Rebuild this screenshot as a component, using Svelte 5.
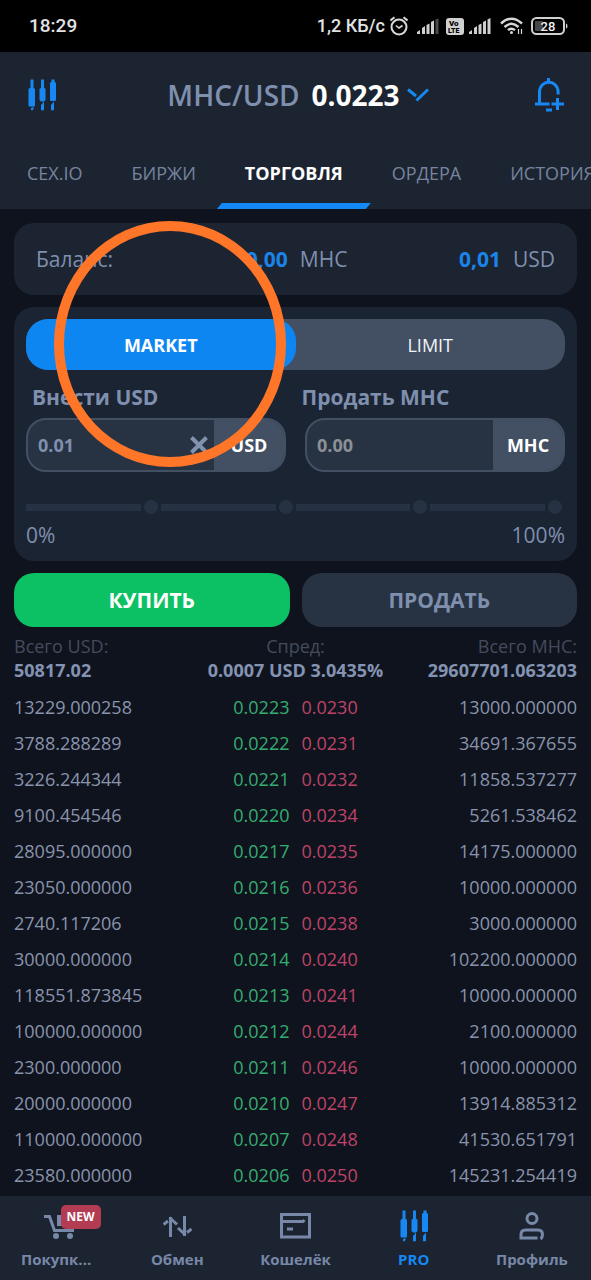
<script>
  const tabs = ['CEX.IO', 'БИРЖИ', 'ТОРГОВЛЯ', 'ОРДЕРА', 'ИСТОРИЯ'];
  let activeTab = $state('ТОРГОВЛЯ');
  let mode = $state('MARKET');
  let buyAmount = $state('0.01');
  let sellAmount = $state('');
  let percent = $state(0);

  const book = [
    ['13229.000258', '0.0223', '0.0230', '13000.000000'],
    ['3788.288289', '0.0222', '0.0231', '34691.367655'],
    ['3226.244344', '0.0221', '0.0232', '11858.537277'],
    ['9100.454546', '0.0220', '0.0234', '5261.538462'],
    ['28095.000000', '0.0217', '0.0235', '14175.000000'],
    ['23050.000000', '0.0216', '0.0236', '10000.000000'],
    ['2740.117206', '0.0215', '0.0238', '3000.000000'],
    ['30000.000000', '0.0214', '0.0240', '102200.000000'],
    ['118551.873845', '0.0213', '0.0241', '10000.000000'],
    ['100000.000000', '0.0212', '0.0244', '2100.000000'],
    ['2300.000000', '0.0211', '0.0246', '10000.000000'],
    ['20000.000000', '0.0210', '0.0247', '13914.885312'],
    ['110000.000000', '0.0207', '0.0248', '41530.651791'],
    ['23580.000000', '0.0206', '0.0250', '145231.254419']
  ];
</script>

{#snippet candles()}
  <svg width="30" height="32" viewBox="0 0 30 32" fill="currentColor" aria-hidden="true">
    <path d="M3.500 0.500h3v8l1.500 1.500v16.500q0 1-1 1h-4.500q-1 0-1-1v-16.500l2-1.500zM4 29l2.500-1v2l-1 1.300h-1.500z" />
    <path d="M14 0.500h3v8l1.500 1.500v11l-1.500 1.500h-3l-1.500-1.500v-11l1.500-1.500zM14 26l3-3.500v8.800h-3z" />
    <path d="M24.500 0.500h3v2l1.500 1.500v16.500q0 1.500-1 1.500h-4q-1 0-1-1.500v-16.500l1.500-1.500zM24 26l3-3.500v8.800h-3z" />
  </svg>
{/snippet}

<div class="app">
  <div class="status">
    <span>18:29</span>
    <div class="status-right">
      <span class="speed">1,2 КБ/с</span>
      <svg width="18" height="20" viewBox="0 0 18 20" fill="none" stroke="#d8d8d8" stroke-width="2" aria-hidden="true">
        <circle cx="9" cy="11" r="7.500" />
        <path d="M0.500 4.500L4.500 1.200M17.500 4.500L13.500 1.200" />
        <path d="M6 9.500l3 2.500 3.500-2.500" stroke-width="1.600" />
      </svg>
      <svg class="signal" width="22" height="16" viewBox="0 0 22 16" fill="#cfcfcf" aria-hidden="true">
        <path d="M0 16v-2l3-2v4zM5 16v-6l3-2v8zM9.500 16v-9l3-1.500v10.500zM14 16v-12l3-1.500v13.500z" />
        <path d="M18.500 16v-14.500l3-1v15.500z" fill="#4a4a4a" />
      </svg>
      <svg class="volte" width="18" height="17" viewBox="0 0 18 17" aria-hidden="true">
        <rect width="18" height="17" rx="3" fill="#d0d0d0" />
        <text x="3" y="8" font-size="8">Vo</text>
        <text x="2" y="15" font-size="7">LTE</text>
      </svg>
      <svg width="22" height="16" viewBox="0 0 22 16" fill="#cfcfcf" aria-hidden="true">
        <path d="M0 16v-2l3-2v4zM5 16v-6l3-2v8zM9.500 16v-9l3-1.500v10.500zM14 16v-12l3-1.500v13.500zM18.500 16v-14.500l3-1.500v16z" />
      </svg>
      <svg class="wifi" width="24" height="18" viewBox="0 0 24 18" fill="none" stroke="#d8d8d8" stroke-width="2.400" aria-hidden="true">
        <path d="M1 6.500q10.500-9.500 21 0M4.500 10q7-6.500 14 0M8 13.200q3.500-3 7 0" />
        <circle cx="11.500" cy="15.500" r="1.500" fill="#d8d8d8" stroke="none" />
        <path d="M18.500 12v5M21.500 12v5" stroke-width="1.200" />
      </svg>
      <svg class="battery" width="37" height="18" viewBox="0 0 37 18" aria-hidden="true">
        <rect x="1" y="1" width="32" height="16" rx="4.500" fill="none" stroke="#d0d0d0" stroke-width="2" />
        <rect x="4" y="4" width="8" height="10" rx="1" fill="#484848" />
        <path d="M35 6.500q1.500 0 1.500 2.500t-1.500 2.500z" fill="#d0d0d0" />
        <text x="17" y="13.500" text-anchor="middle" font-size="13">28</text>
      </svg>
    </div>
  </div>

  <header>
    <div class="topbar">
      <button class="icon" aria-label="PRO">{@render candles()}</button>
      <button class="pair">
        <span class="symbol">MHC/USD</span>
        <span class="price">0.0223</span>
        <svg width="22" height="14" viewBox="0 0 22 14" fill="none" stroke="#1788f2" stroke-width="3" aria-hidden="true">
          <path d="M1 1.500l8 6.500M21 1.500l-11.500 11" />
        </svg>
      </button>
      <button class="icon" aria-label="Уведомления">
        <svg width="30" height="34" viewBox="0 0 30 34" fill="none" stroke="currentColor" stroke-width="3" aria-hidden="true">
          <path d="M13.500 0v4M4.500 25v-11a9.300 9.800 0 0 1 18.600 0v2.500M0 26h14.500M11 32h6" />
          <path d="M22.500 20v12M16.500 26h12.500" />
        </svg>
      </button>
    </div>
    <nav class="tabs">
      {#each tabs as tab}
        <button class:active={tab === activeTab} onclick={() => (activeTab = tab)}>{tab}</button>
      {/each}
    </nav>
  </header>

  <main>
    <section class="card balance">
      <span>Баланс:</span>
      <span class="sum"><b>0,00</b>MHC</span>
      <span class="sum"><b>0,01</b>USD</span>
    </section>

    <section class="card trade">
      <div class="toggle">
        <button class:on={mode === 'MARKET'} onclick={() => (mode = 'MARKET')}>MARKET</button>
        <button class:on={mode === 'LIMIT'} onclick={() => (mode = 'LIMIT')}>LIMIT</button>
      </div>
      <div class="labels">
        <label for="buy">Внести USD</label>
        <label for="sell">Продать MHC</label>
      </div>
      <div class="fields">
        <div class="field">
          <input id="buy" type="text" bind:value={buyAmount} />
          <button class="clear" aria-label="Очистить" onclick={() => (buyAmount = '')}>
            <svg width="18" height="18" viewBox="0 0 18 18" stroke="#8292ae" stroke-width="4" aria-hidden="true">
              <path d="M1.500 1.500l15 15M16.500 1.500l-15 15" />
            </svg>
          </button>
          <span class="unit">USD</span>
        </div>
        <div class="field">
          <input id="sell" type="text" placeholder="0.00" bind:value={sellAmount} />
          <span class="unit">MHC</span>
        </div>
      </div>
      <div class="slider">
        {#each [25, 50, 75, 100] as step}
          <div class="step"><i class="line"></i><i class="dot"></i></div>
        {/each}
        <input type="range" min="0" max="100" step="25" aria-label="Процент" bind:value={percent} />
      </div>
      <div class="range"><span>0%</span><span>100%</span></div>
    </section>

    <div class="actions">
      <button class="buy">КУПИТЬ</button>
      <button class="sell">ПРОДАТЬ</button>
    </div>

    <div class="totals">
      <div><span>Всего USD:</span><b>50817.02</b></div>
      <div><span>Спред:</span><b>0.0007 USD 3.0435%</b></div>
      <div><span>Всего MHC:</span><b>29607701.063203</b></div>
    </div>

    <table>
      <tbody>
        {#each book as [bidAmount, bid, ask, askAmount]}
          <tr>
            <td class="amount">{bidAmount}</td>
            <td class="bid">{bid}</td>
            <td class="ask">{ask}</td>
            <td class="amount right">{askAmount}</td>
          </tr>
        {/each}
      </tbody>
    </table>
  </main>

  <nav class="bottom">
    <a href="#buy-crypto">
      <span class="glyph">
        <svg width="31" height="25" viewBox="0 0 31 25" fill="none" stroke="currentColor" stroke-width="3" aria-hidden="true">
          <path d="M0 2.500h5.500l5 14h19.500" />
          <path d="M13 1h15l-3 11h-12z" fill="currentColor" stroke="none" />
          <circle cx="12" cy="22" r="3" fill="currentColor" stroke="none" />
          <circle cx="26" cy="22" r="3" fill="currentColor" stroke="none" />
        </svg>
        <span class="badge">NEW</span>
      </span>
      <span class="cut">Покупк...</span>
    </a>
    <a href="#exchange">
      <span class="glyph">
        <svg width="29" height="21" viewBox="0 0 29 21" fill="none" stroke="currentColor" stroke-width="3" aria-hidden="true">
          <path d="M7.500 21v-20M21.500 0v20" />
          <path d="M6.500 1.500l7.500 7M15 12l7.500 7" />
          <path d="M0.500 8.500l4.500-3.500M24 16.500l4.500-3.500" />
        </svg>
      </span>
      <span>Обмен</span>
    </a>
    <a href="#wallet">
      <span class="glyph">
        <svg width="31" height="26" viewBox="0 0 31 26" fill="none" stroke="currentColor" stroke-width="3" aria-hidden="true">
          <path d="M1.500 1.500h28v22.500h-28zM1.500 8.500h21.500l1.500-1.500M7 16h6" />
        </svg>
      </span>
      <span>Кошелёк</span>
    </a>
    <a href="#pro" class="current">
      <span class="glyph">{@render candles()}</span>
      <span>PRO</span>
    </a>
    <a href="#profile">
      <span class="glyph">
        <svg width="26" height="28" viewBox="0 0 26 28" fill="none" stroke="currentColor" stroke-width="3" aria-hidden="true">
          <circle cx="13" cy="6.500" r="5" />
          <path d="M18.500 26h-16.500v-3.500q0-4.500 4.500-4.500h12.500q4.500 0 4.500 4.500 0 3-2 4.500" />
        </svg>
      </span>
      <span>Профиль</span>
    </a>
  </nav>

  <div class="ring"></div>
</div>

<style>
  :global(body) {
    background: #0f131e;
  }
  .app {
    position: relative;
    display: flex;
    flex-direction: column;
    min-height: 100vh;
    overflow: hidden;
    background: #0f131e;
    color: #7f8fae;
    font: 18px/24px 'Open Sans', sans-serif;
  }
  .app * {
    box-sizing: border-box;
  }
  button {
    border: 0;
    padding: 0;
    background: none;
    color: inherit;
    font: inherit;
  }
  svg {
    display: block;
    flex: none;
  }
  .status {
    display: flex;
    align-items: center;
    justify-content: space-between;
    height: 52px;
    padding: 0 23px 0 29px;
    background: #000;
    color: #e2e2e2;
    font: 500 19px/24px Roboto, sans-serif;
  }
  .speed {
    font-size: 18px;
  }
  .status-right {
    display: flex;
    align-items: center;
    gap: 5px;
  }
  .signal {
    margin: 0 2px 0 4px;
  }
  .volte text {
    font-family: Roboto, sans-serif;
    font-weight: 900;
    fill: #000;
  }
  .wifi {
    margin-left: 4px;
  }
  .battery {
    margin-left: 2px;
  }
  .battery text {
    font-family: Roboto, sans-serif;
    font-weight: 500;
    fill: #f0f0f0;
  }

  header {
    background: #1c2431;
  }
  .topbar {
    display: flex;
    align-items: center;
    justify-content: space-between;
    height: 86px;
    padding: 0 26px 0 27px;
  }
  .icon {
    color: #1687f3;
  }
  .pair {
    display: flex;
    align-items: center;
    padding-left: 4px;
    font-size: 28px;
    font-weight: 700;
    line-height: 36px;
  }
  .symbol {
    font-weight: 600;
  }
  .price {
    margin: 0 7px 0 12px;
    color: #fff;
  }
  .tabs {
    display: flex;
    gap: 1px;
    padding-left: 3px;
    height: 71px;
    overflow: hidden;
  }
  .tabs button {
    position: relative;
    flex: none;
    padding: 0 24px 1px;
    color: #76849f;
  }
  .tabs .active {
    color: #fff;
    font-weight: 700;
  }
  .tabs .active::after {
    content: '';
    position: absolute;
    left: -4px;
    right: -4px;
    bottom: 0;
    height: 6px;
    background: #1389f5;
    clip-path: polygon(5px 0, 100% 0, calc(100% - 5px) 100%, 0 100%);
  }

  main {
    flex: 1;
    padding: 14px 14px 0;
  }
  .card {
    border-radius: 20px;
    background: #1c2431;
  }
  .balance {
    display: grid;
    grid-template-columns: auto 1fr 40%;
    align-items: center;
    height: 72px;
    padding: 0 22px;
    font-size: 21px;
  }
  .sum {
    text-align: right;
  }
  .sum b {
    margin-right: 12px;
    color: #1a84ea;
  }
  .trade {
    margin-top: 12px;
    padding: 12px 12px 13px;
    background: #1b2432;
  }
  .toggle {
    display: grid;
    grid-template-columns: 1fr 1fr;
    height: 51px;
    border-radius: 22px;
    background: #435064;
    color: #f2f5f8;
  }
  .toggle .on {
    border-radius: 22px;
    background: #0d86f2;
    color: #fff;
    font-weight: 700;
  }
  .labels {
    display: grid;
    grid-template-columns: 1fr 1fr;
    padding: 14px 0 8px;
    font-size: 21px;
    font-weight: 700;
    line-height: 26px;
  }
  .labels label {
    padding-left: 6px;
  }
  .fields {
    display: grid;
    grid-template-columns: 1fr 1fr;
    gap: 19px;
  }
  .field {
    display: flex;
    align-items: center;
    height: 54px;
    overflow: hidden;
    border: 2px solid #435064;
    border-radius: 20px;
    background: #273343;
  }
  .field input {
    flex: 1;
    min-width: 0;
    padding: 0 10px;
    border: 0;
    outline: 0;
    background: none;
    color: #7f8fae;
    font: 700 18px/24px 'Open Sans', sans-serif;
  }
  .field input::placeholder {
    color: #8b9097;
    opacity: 1;
  }
  .clear {
    margin-right: 6px;
  }
  .unit {
    display: grid;
    place-items: center;
    align-self: stretch;
    width: 70px;
    background: #435064;
    color: #fff;
    font-weight: 700;
  }
  .slider {
    position: relative;
    display: grid;
    grid-template-columns: repeat(4, 1fr);
    height: 14px;
    margin-top: 28px;
  }
  .slider input {
    position: absolute;
    inset: 0;
    width: 100%;
    margin: 0;
    opacity: 0;
  }
  .step {
    display: flex;
    align-items: center;
    gap: 3px;
    padding-right: 3px;
  }
  .line {
    flex: 1;
    height: 7px;
    background: #263243;
  }
  .dot {
    width: 14px;
    height: 14px;
    border-radius: 50%;
    background: #263243;
  }
  .range {
    display: flex;
    justify-content: space-between;
    margin-top: 8px;
    font-size: 21px;
    line-height: 26px;
  }
  .actions {
    display: grid;
    grid-template-columns: 1fr 1fr;
    gap: 12px;
    margin-top: 12px;
  }
  .actions button {
    height: 54px;
    border-radius: 20px;
    font-size: 21px;
    font-weight: 700;
  }
  .buy {
    background: #0cc163;
    color: #fff;
  }
  .sell {
    background: #273343;
  }
  .totals {
    display: grid;
    grid-template-columns: 1fr auto 1fr;
    margin: 7px 0;
  }
  .totals div {
    display: flex;
    flex-direction: column;
    align-items: center;
  }
  .totals div:first-child {
    align-items: flex-start;
  }
  .totals div:last-child {
    align-items: flex-end;
  }
  .totals span {
    color: #434c5c;
  }
  .totals b {
    color: #8493b2;
  }
  table {
    width: 100%;
    table-layout: fixed;
    border-collapse: collapse;
  }
  td {
    height: 36px;
    padding: 0;
    color: #8994ac;
  }
  .bid {
    padding-right: 6px;
    color: #35ad70;
    text-align: right;
  }
  .ask {
    padding-left: 6px;
    color: #bd4468;
  }
  .right {
    text-align: right;
  }

  .bottom {
    display: grid;
    grid-template-columns: repeat(5, 1fr);
    height: 84px;
    background: #1c2431;
    font-size: 15px;
    font-weight: 700;
    line-height: 20px;
  }
  .bottom a {
    display: flex;
    flex-direction: column;
    align-items: center;
    gap: 3px;
    padding-top: 10px;
    color: #7888a8;
    text-decoration: none;
  }
  .bottom .current {
    color: #1687f3;
  }
  .cut {
    padding-right: 6px;
  }
  .glyph {
    position: relative;
    display: grid;
    place-items: center;
    height: 40px;
  }
  .badge {
    position: absolute;
    top: -1px;
    left: 17px;
    padding: 2px 6px;
    border-radius: 5px;
    background: #b33c53;
    color: #fff;
    font-size: 12px;
  }
  .ring {
    position: absolute;
    top: 221px;
    left: 54px;
    width: 232px;
    height: 246px;
    border: 10px solid #ff7629;
    border-radius: 50%;
    pointer-events: none;
  }
</style>
